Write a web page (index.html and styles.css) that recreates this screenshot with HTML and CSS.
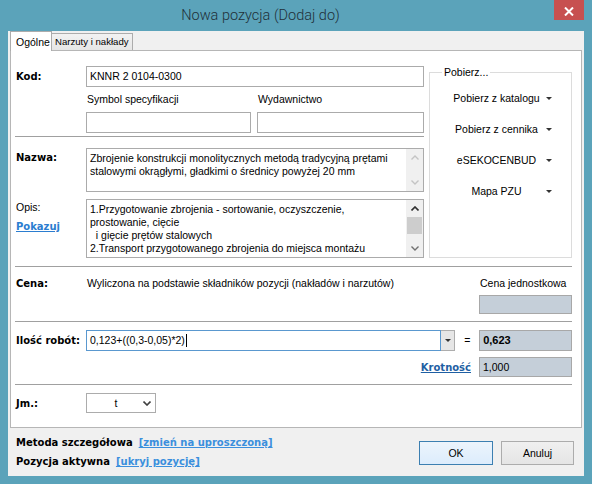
FILE: index.html
```html
<!DOCTYPE html>
<html>
<head>
<meta charset="utf-8">
<title>Nowa pozycja</title>
<link rel="stylesheet" href="styles.css">
</head>
<body>
<div class="window">
  <div class="titlebar">
    <div class="title">Nowa pozycja (Dodaj do)</div>
    <div class="close"><svg width="10" height="9" viewBox="0 0 10 9"><path d="M1 0.5 L9 8.5 M9 0.5 L1 8.5" stroke="#fff" stroke-width="2"/></svg></div>
  </div>
  <div class="client">
    <div class="tabs">
      <div class="tab active">Ogólne</div>
      <div class="tab">Narzuty i nakłady</div>
    </div>
    <div class="panel">
      <div class="top">
        <div class="leftcol">
          <div class="row kodrow">
            <div class="lbl">Kod:</div>
            <div class="box kod">KNNR 2 0104-0300</div>
          </div>
          <div class="subrow">
            <div class="subcol c1">
              <div class="sublbl">Symbol specyfikacji</div>
              <div class="box sub"></div>
            </div>
            <div class="subcol c2">
              <div class="sublbl">Wydawnictwo</div>
              <div class="box sub"></div>
            </div>
          </div>
          <div class="sep"></div>
          <div class="row nazwarow">
            <div class="lbl">Nazwa:</div>
            <div class="box memo nazwa">
              <div class="memotext">Zbrojenie konstrukcji monolitycznych metodą tradycyjną prętami<br>stalowymi okrągłymi, gładkimi o średnicy powyżej 20 mm</div>
              <div class="vscroll">
                <div class="arrow"><svg width="8" height="5" viewBox="0 0 8 5"><polyline points="0.5,4.5 4,1 7.5,4.5" fill="none" stroke="#c4c4c4" stroke-width="1.4"/></svg></div>
                <div class="track"></div>
                <div class="arrow"><svg width="8" height="5" viewBox="0 0 8 5"><polyline points="0.5,0.5 4,4 7.5,0.5" fill="none" stroke="#c4c4c4" stroke-width="1.4"/></svg></div>
              </div>
            </div>
          </div>
          <div class="row opisrow">
            <div class="lblcol">
              <div class="plain">Opis:</div>
              <div class="link pokazuj">Pokazuj</div>
            </div>
            <div class="box memo opis">
              <div class="memotext">1.Przygotowanie zbrojenia - sortowanie, oczyszczenie,<br>prostowanie, cięcie<br>&nbsp; i gięcie prętów stalowych<br>2.Transport przygotowanego zbrojenia do miejsca montażu</div>
              <div class="vscroll">
                <div class="arrow"><svg width="8" height="5" viewBox="0 0 8 5"><polyline points="0.5,4.5 4,1 7.5,4.5" fill="none" stroke="#303030" stroke-width="1.6"/></svg></div>
                <div class="thumb"></div>
                <div class="track"></div>
                <div class="arrow"><svg width="8" height="5" viewBox="0 0 8 5"><polyline points="0.5,0.5 4,4 7.5,0.5" fill="none" stroke="#707070" stroke-width="1.4"/></svg></div>
              </div>
            </div>
          </div>
        </div>
        <fieldset class="group">
          <legend>Pobierz...</legend>
          <div class="ddlist">
            <div class="dd"><span class="ddtext">Pobierz z katalogu</span><span class="tri"></span></div>
            <div class="dd"><span class="ddtext">Pobierz z cennika</span><span class="tri"></span></div>
            <div class="dd"><span class="ddtext">eSEKOCENBUD</span><span class="tri"></span></div>
            <div class="dd"><span class="ddtext">Mapa PZU</span><span class="tri"></span></div>
          </div>
        </fieldset>
      </div>
      <div class="sep sep-cena"></div>
      <div class="row cenarow">
        <div class="lbl">Cena:</div>
        <div class="cenatext">Wyliczona na podstawie składników pozycji (nakładów i narzutów)</div>
        <div class="cenacol">
          <div class="cenalbl">Cena jednostkowa</div>
          <div class="ro cenabox"></div>
        </div>
      </div>
      <div class="sep sep-ilosc"></div>
      <div class="row iloscrow">
        <div class="lbl">Ilość robót:</div>
        <div class="box ilosc">0,123+((0,3-0,05)*2)<span class="caret"></span></div>
        <div class="ddbtn"><span class="tri"></span></div>
        <div class="eq">=</div>
        <div class="ro val bold">0,623</div>
      </div>
      <div class="row krotrow">
        <div class="link krot">Krotność</div>
        <div class="ro val">1,000</div>
      </div>
      <div class="sep sep-jm"></div>
      <div class="row jmrow">
        <div class="lbl">Jm.:</div>
        <div class="select">
          <span class="seltext">t</span>
          <svg width="8" height="5" viewBox="0 0 8 5"><polyline points="0.5,0.5 4,4 7.5,0.5" fill="none" stroke="#404040" stroke-width="1.6"/></svg>
        </div>
      </div>
    </div>
    <div class="bottombar">
      <div class="status">
        <div class="stline"><span class="bt">Metoda szczegółowa</span><span class="blink">[zmień na uproszczoną]</span></div>
        <div class="stline"><span class="bt">Pozycja aktywna</span><span class="blink">[ukryj pozycję]</span></div>
      </div>
      <div class="buttons">
        <div class="btn ok">OK</div>
        <div class="btn">Anuluj</div>
      </div>
    </div>
  </div>
</div>
</body>
</html>
```
FILE: styles.css
```css
* { box-sizing: border-box; }
html, body { margin: 0; padding: 0; }
body {
  width: 592px;
  height: 484px;
  overflow: hidden;
  background: #5ba3ba;
  font-family: "Liberation Sans", Arial, sans-serif;
  font-size: 10.5px;
  line-height: 13px;
  color: #000;
}
.window {
  height: 484px;
  display: flex;
  flex-direction: column;
}
.titlebar {
  height: 31px;
  flex: none;
  position: relative;
  display: flex;
  align-items: center;
  justify-content: center;
  padding-right: 71px;
}
.title {
  font-family: Roboto, "Liberation Sans", sans-serif;
  font-size: 14.5px;
  font-weight: 300;
  color: #1f3039;
}
.close {
  position: absolute;
  top: 0;
  right: 8px;
  width: 30px;
  height: 20px;
  background: #c75050;
  display: flex;
  align-items: center;
  justify-content: center;
  padding-top: 2px;
}
.client {
  flex: 1;
  margin: 0 8px 8px 8px;
  background: #f0f0f0;
  display: flex;
  flex-direction: column;
}
.tabs {
  height: 19px;
  flex: none;
  display: flex;
  align-items: flex-end;
  padding-left: 2px;
}
.tab {
  height: 17px;
  border: 1px solid #acacac;
  border-bottom: none;
  background: linear-gradient(#f2f2f2, #e6e6e6);
  padding: 1px 3px 0 3px;
  margin-left: -1px;
  line-height: 14px;
  font-size: 9.6px;
}
.tab.active {
  height: 20px;
  margin-left: 0;
  margin-bottom: -1px;
  background: #fff;
  position: relative;
  z-index: 1;
  width: 42px;
  padding: 3px 0 0 5px;
  font-size: 10.5px;
}
.panel {
  flex: none;
  height: 378px;
  margin: 0 2px;
  border: 1px solid #b6b6b6;
  background: #fff;
  padding: 0 9px 0 4px;
}
.top {
  display: flex;
  gap: 5px;
}
.leftcol {
  width: 409px;
  padding-top: 15px;
}
.row { display: flex; }
.lbl {
  width: 71px;
  flex: none;
  padding-left: 1px;
  font-family: "DejaVu Sans", sans-serif;
  font-weight: bold;
  font-size: 10px;
}
.box {
  border: 1px solid #ababab;
  background: #fff;
  padding: 0 3px;
}
.kodrow { align-items: center; }
.kod {
  width: 338px;
  height: 21px;
  line-height: 19px;
}
.subrow {
  display: flex;
  padding-left: 71px;
  gap: 6px;
}
.subcol.c1 { width: 165px; }
.subcol.c2 { width: 167px; }
.sublbl {
  height: 25px;
  padding: 6px 0 0 1px;
}
.box.sub { height: 21px; }
.sep {
  height: 2px;
  border-top: 1px solid #a0a0a0;
  border-bottom: 1px solid #fff;
  margin-top: 3px;
}
.nazwarow { margin-top: 10px; }
.nazwarow .lbl { padding-top: 3px; }
.memo {
  width: 338px;
  display: flex;
  padding: 0;
}
.nazwa { height: 44px; }
.opis { height: 59px; }
.memotext {
  flex: 1;
  padding: 3px 3px;
  white-space: nowrap;
  overflow: hidden;
}
.vscroll {
  width: 17px;
  flex: none;
  background: #f0f0f0;
  display: flex;
  flex-direction: column;
}
.arrow {
  height: 17px;
  flex: none;
  display: flex;
  align-items: center;
  justify-content: center;
}
.track { flex: 1; }
.thumb {
  height: 17px;
  flex: none;
  background: #cdcdcd;
  margin: 0 1px;
}
.opisrow { margin-top: 7px; }
.lblcol {
  width: 71px;
  flex: none;
  padding: 2px 0 0 1px;
}
.link {
  font-family: "DejaVu Sans", sans-serif;
  font-weight: bold;
  font-size: 10px;
  text-decoration: underline;
}
.pokazuj {
  color: #2b7dd0;
  margin-top: 6px;
}
.group {
  margin: 15px 0 0 0;
  padding: 0;
  width: 144px;
  height: 192px;
  border: 1px solid #dcdcdc;
  min-width: 0;
}
.group legend {
  margin-left: 12px;
  padding: 0 2px;
  line-height: 13px;
}
.ddlist {
  display: flex;
  flex-direction: column;
  gap: 7px;
  padding-top: 7px;
}
.dd {
  height: 24px;
  margin: 0 14px 0 20px;
  display: flex;
  align-items: center;
}
.ddtext {
  flex: 1;
  text-align: center;
}
.dd .tri { margin: 0 5px 0 3px; }
.tri {
  width: 0;
  height: 0;
  border-left: 3px solid transparent;
  border-right: 3px solid transparent;
  border-top: 3px solid #333;
  flex: none;
}
.sep-cena { margin-top: 8px; }
.cenarow { padding-top: 9px; }
.cenatext {
  flex: 1;
  padding-left: 1px;
}
.cenacol { width: 93px; flex: none; }
.cenalbl { padding-left: 1px; }
.ro {
  border: 1px solid #a8a8a8;
  background: #c5cfd9;
}
.cenabox {
  margin-top: 5px;
  height: 19px;
}
.sep-ilosc { margin-top: 7px; }
.iloscrow {
  margin-top: 7px;
  align-items: center;
  height: 21px;
}
.ilosc {
  width: 356px;
  height: 21px;
  line-height: 19px;
  border-color: #5a98cf;
  display: flex;
  align-items: center;
}
.caret {
  width: 1px;
  height: 13px;
  background: #000;
  margin-left: 1px;
}
.ddbtn {
  width: 14px;
  height: 21px;
  border: 1px solid #adadad;
  border-left: none;
  background: #e6e6e6;
  display: flex;
  align-items: center;
  justify-content: center;
}
.eq {
  width: 24px;
  text-align: center;
}
.val {
  width: 93px;
  height: 21px;
  line-height: 19px;
  padding-left: 3px;
}
.val.bold {
  font-weight: bold;
  font-size: 11px;
}
.krotrow {
  margin-top: 6px;
  justify-content: flex-end;
  align-items: center;
}
.krotrow .val { height: 20px; line-height: 18px; }
.krot {
  color: #1f5fa3;
  margin-right: 8px;
}
.sep-jm { margin-top: 7px; }
.jmrow {
  margin-top: 7px;
  align-items: center;
}
.select {
  width: 70px;
  height: 20px;
  border: 1px solid #acacac;
  background: #fff;
  display: flex;
  align-items: center;
  padding: 0 4px 0 0;
}
.seltext {
  flex: 1;
  text-align: center;
  padding-left: 2px;
}
.bottombar {
  flex: 1;
  display: flex;
  justify-content: space-between;
  padding: 0 10px 0 8px;
}
.status {
  padding-top: 5px;
  font-family: "DejaVu Sans", sans-serif;
  font-weight: bold;
  font-size: 10px;
  line-height: 19px;
}
.stline { display: flex; gap: 6px; }
.blink {
  color: #3b8fdd;
  text-decoration: underline;
}
.buttons {
  padding-top: 13px;
  display: flex;
  gap: 8px;
}
.btn {
  width: 73px;
  height: 24px;
  border: 1px solid #acacac;
  background: linear-gradient(#f0f0f0, #e5e5e5);
  display: flex;
  align-items: center;
  justify-content: center;
}
.btn.ok {
  width: 74px;
  border-color: #3c7fb1;
  background: linear-gradient(#ecf4fc, #dcecfc);
}
```
